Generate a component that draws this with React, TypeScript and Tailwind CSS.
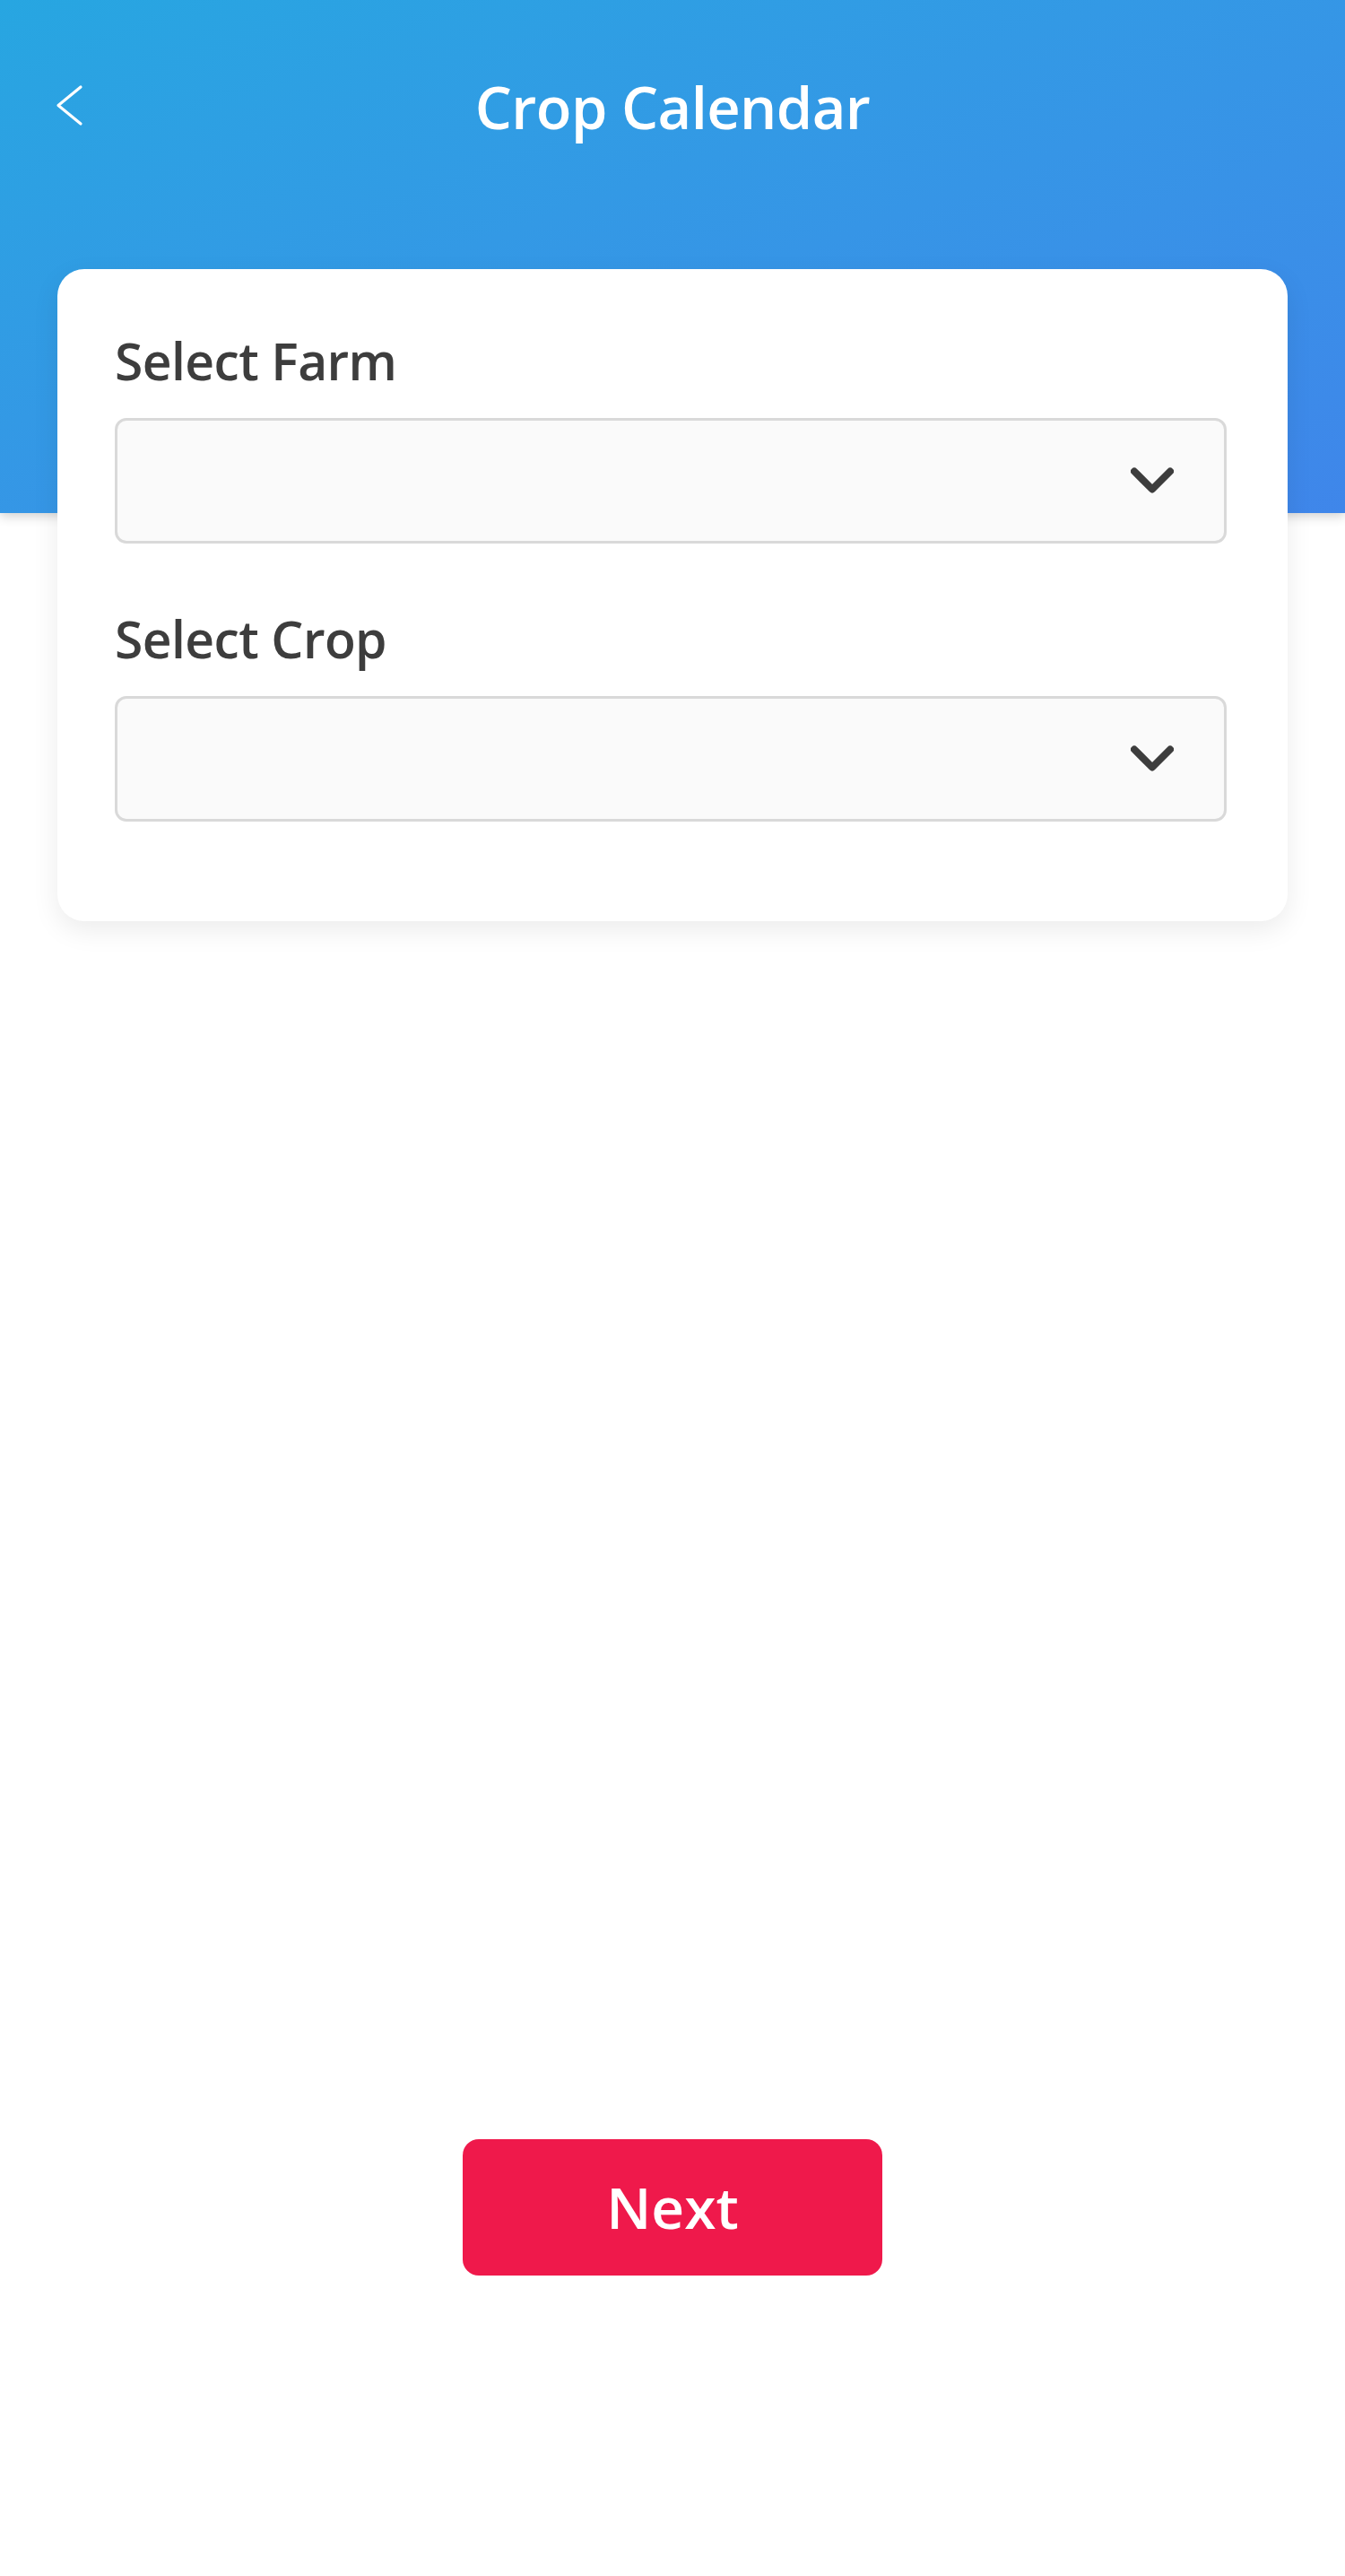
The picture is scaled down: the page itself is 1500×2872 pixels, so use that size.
import React from 'react';

const ChevronDown = () => (
  <svg width="48" height="30" viewBox="0 0 48 30" fill="none">
    <path d="M4 4.5 L24 24.5 L44 4.5" stroke="#3d3d3d" strokeWidth="8" strokeLinecap="round" strokeLinejoin="round" />
  </svg>
);

const SelectField = ({ label, className }: { label: string; className?: string }) => (
  <div className={className}>
    <div className="text-[57px] leading-none font-semibold text-[#3d3d3d] tracking-[-0.6px]">{label}</div>
    <button
      type="button"
      className="mt-[35px] flex h-[140px] w-full items-center justify-end rounded-[13px] border-[3.5px] border-[#d9d9d9] bg-[#fafafa] pr-[56px]"
    >
      <ChevronDown />
    </button>
  </div>
);

export default function App() {
  return (
    <div className="min-h-screen bg-white font-['Open_Sans',sans-serif]">
      <header className="relative h-[572px] bg-linear-to-br from-[#27a6e1] to-[#3f86ea] shadow-[0_3px_12px_rgba(0,0,0,0.2)]">
        <div className="grid h-[66px] grid-cols-[1fr_auto_1fr] items-center translate-y-[86px]">
          <button type="button" className="flex items-center pl-[62px] -translate-y-[2px]">
            <svg width="34" height="48" viewBox="0 0 34 48" fill="none">
              <path d="M28 4 L3 24.5 L28 45" stroke="white" strokeWidth="3.2" strokeLinecap="round" strokeLinejoin="round" />
            </svg>
          </button>
          <h1 className="text-[65px] leading-none font-semibold text-white tracking-[-0.6px]">Crop Calendar</h1>
          <div />
        </div>
      </header>

      <main className="relative -mt-[272px] px-16">
        <div className="rounded-[30px] bg-white pl-16 pr-[68px] pt-[74px] pb-[111px] shadow-[0_10px_30px_rgba(0,0,0,0.08)]">
          <SelectField label="Select Farm" />
          <SelectField label="Select Crop" className="mt-[78px]" />
        </div>
      </main>

      <div className="mt-[1358px] flex justify-center pb-[330px]">
        <button
          type="button"
          className="flex h-[152px] w-[468px] items-center justify-center rounded-[18px] bg-[#ef194b] text-[64px] leading-none font-semibold text-white"
        >
          Next
        </button>
      </div>
    </div>
  );
}
